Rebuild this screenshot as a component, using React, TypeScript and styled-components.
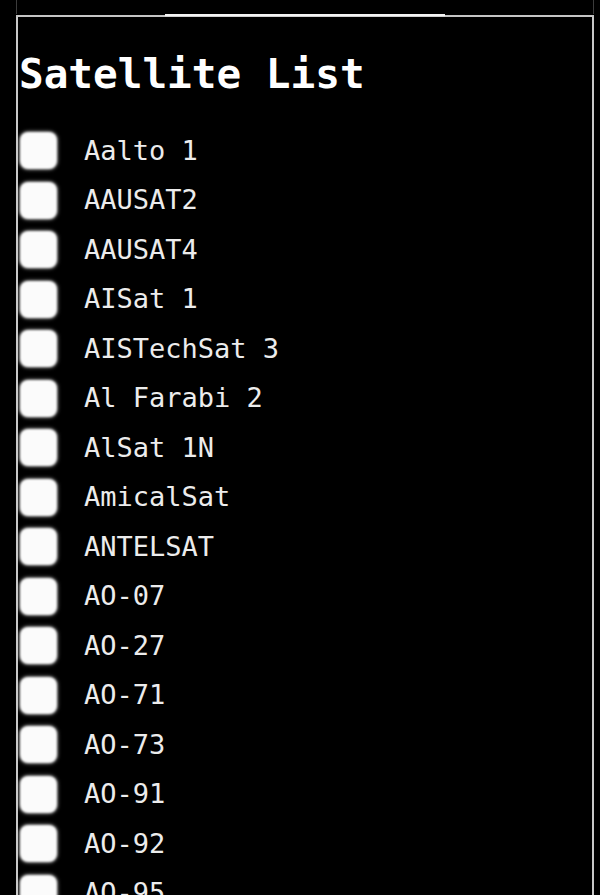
import React from "react";
import styled, { createGlobalStyle } from "styled-components";

const GlobalStyle = createGlobalStyle`
  html, body {
    margin: 0;
    padding: 0;
    background: #000;
  }
  body {
    font-family: "DejaVu Sans Mono", "Liberation Mono", monospace;
    color: #ececec;
  }
`;

const Page = styled.div`
  padding: 0 6px 0 16px;
  background: #000;
`;

const PrevSection = styled.div`
  height: 14px;
  border-left: 1px solid #3c3c3c;
  border-right: 1px solid #3c3c3c;
`;

const TopRule = styled.div`
  display: flex;
  align-items: flex-end;
  height: 3px;
`;

const RuleSegment = styled.div<{ $width?: number; $bright?: boolean }>`
  flex: ${(p) => (p.$width ? `0 0 ${p.$width}px` : "1 1 auto")};
  height: ${(p) => (p.$bright ? "3px" : "2px")};
  background: ${(p) =>
    p.$bright ? "linear-gradient(#f4f4f4 0 50%, #cfcfcf 50% 100%)" : "#c4c4c4"};
`;

const Panel = styled.section`
  display: flow-root;
  border: 2px solid #c8c8c8;
  border-top: none;
  min-height: 900px;
`;

const Title = styled.h2`
  margin: 33px 0 0 1px;
  font-size: 41px;
  line-height: 48px;
  font-weight: bold;
  color: #fff;
  letter-spacing: 0;
`;

const List = styled.ul`
  list-style: none;
  margin: 28px 0 0;
  padding: 0;
`;

const Row = styled.li`
  display: flex;
  align-items: center;
  height: 49.5px;
`;

const Box = styled.span`
  flex: 0 0 auto;
  width: 37px;
  height: 37px;
  margin-left: 2px;
  border-radius: 8px;
  background: #fbfbfb;
  box-shadow: 0 0 3px 1px rgba(255, 255, 255, 0.5);
  filter: blur(1.1px);
`;

const Label = styled.span`
  margin-left: 27px;
  font-size: 27px;
  line-height: 32px;
  color: #ececec;
  white-space: pre;
`;

const satellites = [
  "Aalto 1",
  "AAUSAT2",
  "AAUSAT4",
  "AISat 1",
  "AISTechSat 3",
  "Al Farabi 2",
  "AlSat 1N",
  "AmicalSat",
  "ANTELSAT",
  "AO-07",
  "AO-27",
  "AO-71",
  "AO-73",
  "AO-91",
  "AO-92",
  "AO-95",
  "AO-109",
  "ARKSAT 1",
];

export default function App() {
  return (
    <>
      <GlobalStyle />
      <Page>
        <PrevSection />
        <TopRule>
          <RuleSegment $width={149} />
          <RuleSegment $width={280} $bright />
          <RuleSegment />
        </TopRule>
        <Panel>
          <Title>Satellite List</Title>
          <List>
            {satellites.map((s) => (
              <Row key={s}>
                <Box />
                <Label>{s}</Label>
              </Row>
            ))}
          </List>
        </Panel>
      </Page>
    </>
  );
}
